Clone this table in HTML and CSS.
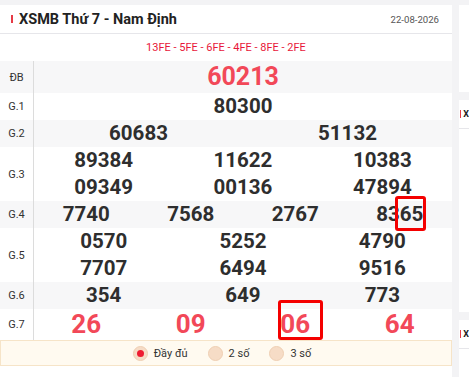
FILE: index.html
```html
<!DOCTYPE html>
<html lang="vi">
<head>
<meta charset="utf-8">
<title>XSMB Thứ 7 - Nam Định</title>
<link rel="stylesheet" href="styles.css">
</head>
<body>
<div class="page">
  <div class="card main">
    <div class="head">
      <h2 class="title">XSMB Thứ 7 - Nam Định</h2>
      <span class="date">22-08-2026</span>
    </div>
    <div class="codes">13FE - 5FE - 6FE - 4FE - 8FE - 2FE</div>
    <div class="table">
      <div class="row alt db">
        <div class="lbl">ĐB</div>
        <div class="nums c1"><span class="red big">60213</span></div>
      </div>
      <div class="row">
        <div class="lbl">G.1</div>
        <div class="nums c1"><span>80300</span></div>
      </div>
      <div class="row alt">
        <div class="lbl">G.2</div>
        <div class="nums c2"><span>60683</span><span>51132</span></div>
      </div>
      <div class="row">
        <div class="lbl">G.3</div>
        <div class="nums c3"><span>89384</span><span>11622</span><span>10383</span><span>09349</span><span>00136</span><span>47894</span></div>
      </div>
      <div class="row alt">
        <div class="lbl">G.4</div>
        <div class="nums c4"><span>7740</span><span>7568</span><span>2767</span><span>8365</span></div>
      </div>
      <div class="row">
        <div class="lbl">G.5</div>
        <div class="nums c3"><span>0570</span><span>5252</span><span>4790</span><span>7707</span><span>6494</span><span>9516</span></div>
      </div>
      <div class="row alt">
        <div class="lbl">G.6</div>
        <div class="nums c3"><span>354</span><span>649</span><span>773</span></div>
      </div>
      <div class="row g7">
        <div class="lbl">G.7</div>
        <div class="nums c4"><span class="red">26</span><span class="red">09</span><span class="red">06</span><span class="red">64</span></div>
      </div>
    </div>
    <div class="opts">
      <label class="opt"><span class="radio on"></span>Đầy đủ</label>
      <label class="opt"><span class="radio"></span>2 số</label>
      <label class="opt"><span class="radio"></span>3 số</label>
    </div>
    <div class="mark m1"></div>
    <div class="mark m2"></div>
  </div>
  <div class="side">
    <div class="card s1"></div>
    <div class="card s2"><div class="shead">X</div></div>
    <div class="card s3"><div class="shead">X</div></div>
  </div>
</div>
</body>
</html>
```
FILE: styles.css
```css
* { box-sizing: border-box; }
html, body { margin: 0; padding: 0; }
body {
  background: #f3f3f5;
  font-family: Roboto, "Liberation Sans", Arial, sans-serif;
  color: #2b2b2b;
  width: 469px;
  height: 377px;
  overflow: hidden;
}
.page {
  display: flex;
  gap: 7px;
  padding-top: 5px;
}
.card { background: #fff; }
.main {
  width: 452px;
  flex: none;
  position: relative;
  padding-bottom: 20px;
}
.head {
  height: 29px;
  border-bottom: 1px solid #e6e6ea;
  display: flex;
  align-items: center;
  justify-content: space-between;
  padding: 0 13px 0 11px;
}
.title {
  margin: 0;
  font-size: 14.5px;
  font-weight: 700;
  color: #222;
  display: flex;
  align-items: center;
}
.title::before {
  content: "";
  width: 2px;
  height: 8px;
  background: #e63a46;
  margin-right: 6px;
}
.date { font-size: 9.6px; color: #555; }
.codes {
  height: 27px;
  display: flex;
  align-items: center;
  justify-content: center;
  font-size: 11px;
  color: #e8163a;
}
.table { display: flex; flex-direction: column; }
.row {
  display: grid;
  grid-template-columns: 34px 1fr;
}
.row.alt { background: #f7f7f8; }
.lbl {
  border-right: 1px solid #dcdcdc;
  display: flex;
  align-items: center;
  justify-content: center;
  font-size: 11px;
  color: #333;
}
.nums {
  display: grid;
  font-size: 20.5px;
  font-weight: 700;
  color: #2e2e2e;
  text-align: center;
}
.nums span { line-height: 27px; }
.c1 { grid-template-columns: 1fr; }
.c2 { grid-template-columns: repeat(2, 1fr); }
.c3 { grid-template-columns: repeat(3, 1fr); }
.c4 { grid-template-columns: repeat(4, 1fr); }
.db .nums span { line-height: 32px; }
.red { color: #f24858; }
.big { font-size: 25px; }
.g7 .nums span { line-height: 31px; font-size: 26px; }
.opts {
  height: 26px;
  background: #fffaf0;
  border: 1px solid #f6e4c8;
  display: flex;
  align-items: center;
  justify-content: center;
  gap: 20px;
  padding-right: 8px;
  font-size: 11px;
  color: #333;
}
.opt { display: flex; align-items: center; gap: 6px; }
.radio {
  width: 15px;
  height: 15px;
  border-radius: 50%;
  background: #f6dcc6;
  border: 1px solid #efcfb3;
  display: flex;
  align-items: center;
  justify-content: center;
}
.radio.on::after {
  content: "";
  width: 7px;
  height: 7px;
  border-radius: 50%;
  background: #ee1c32;
}
.mark {
  position: absolute;
  border: 3.5px solid #f40000;
  border-radius: 3px;
}
.m1 { left: 395px; top: 191px; width: 31px; height: 35px; }
.m2 { left: 278px; top: 295px; width: 45px; height: 40px; }
.side {
  flex: 1;
  display: flex;
  flex-direction: column;
  gap: 8px;
  min-width: 0;
}
.s1 { height: 87px; }
.s2 { height: 212px; }
.s3 { height: 60px; }
.shead {
  height: 29px;
  border-bottom: 1px solid #e6e6ea;
  display: flex;
  align-items: center;
  padding-left: 1px;
  font-size: 9px;
  font-weight: 700;
  color: #222;
  white-space: nowrap;
}
.shead::before {
  content: "";
  width: 2px;
  height: 8px;
  background: #e63a46;
  margin-right: 2px;
}
```
